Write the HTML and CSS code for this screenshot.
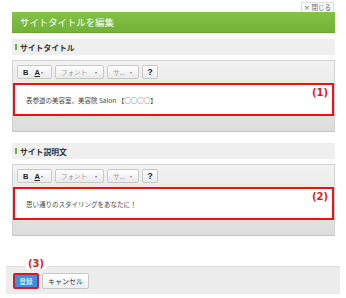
FILE: index.html
```html
<!DOCTYPE html>
<html lang="ja">
<head>
<meta charset="utf-8">
<link rel="stylesheet" href="styles.css">
</head>
<body>
<div class="page">
  <div class="close-row"><span class="close">× 閉じる</span></div>
  <div class="header">サイトタイトルを編集</div>

  <div class="label"><span class="mark"></span>サイトタイトル</div>
  <div class="editor">
    <div class="toolbar">
      <div class="btn btn-ba"><b>B</b><span class="a">A</span><span class="caret">▾</span></div>
      <div class="btn btn-font"><span>フォント</span><span class="caret">▾</span></div>
      <div class="btn btn-size"><span>サ...</span><span class="caret">▾</span></div>
      <div class="btn btn-help">?</div>
    </div>
    <div class="area">
      <span class="text">表参道の美容室、美容院 Salon 【○○○○】</span>
      <span class="note">(1)</span>
    </div>
    <div class="foot"></div>
  </div>

  <div class="label label-2"><span class="mark"></span>サイト説明文</div>
  <div class="editor">
    <div class="toolbar">
      <div class="btn btn-ba"><b>B</b><span class="a">A</span><span class="caret">▾</span></div>
      <div class="btn btn-font"><span>フォント</span><span class="caret">▾</span></div>
      <div class="btn btn-size"><span>サ...</span><span class="caret">▾</span></div>
      <div class="btn btn-help">?</div>
    </div>
    <div class="area">
      <span class="text">思い通りのスタイリングをあなたに！</span>
      <span class="note">(2)</span>
    </div>
    <div class="foot"></div>
  </div>
</div>
<div class="bar">
  <span class="note note-3">(3)</span>
  <div class="submit">登録</div>
  <div class="cancel">キャンセル</div>
</div>
</body>
</html>
```
FILE: styles.css
```css
html, body {
  margin: 0;
  padding: 0;
  background: #fff;
}
body {
  width: 346px;
  height: 298px;
  overflow: hidden;
  font-family: "Noto Sans CJK JP", "Noto Sans", sans-serif;
  color: #333;
}
.page {
  padding: 2px 11px 0 12px;
}
.close-row {
  display: flex;
  justify-content: flex-end;
  padding-right: 1px;
}
.close {
  display: block;
  height: 9px;
  line-height: 9px;
  font-size: 6.5px;
  color: #666;
  padding: 0 2px;
  border: 1px solid #ddd;
  border-bottom: none;
  background: #fafafa;
}
.header {
  height: 21px;
  line-height: 21px;
  background: linear-gradient(#85c247, #72b237);
  color: #fff;
  font-size: 9.4px;
  padding-left: 8px;
  border-bottom: 1px solid #6aa532;
  box-sizing: border-box;
}
.label {
  margin-top: 6px;
  height: 16px;
  background: #efefef;
  display: flex;
  align-items: center;
  font-size: 7.8px;
  font-weight: bold;
  color: #333;
  padding-left: 3px;
}
.label-2 {
  margin-top: 11px;
}
.mark {
  width: 2px;
  height: 6px;
  background: #6cb33e;
  margin-right: 3px;
}
.editor {
  margin-top: 5px;
  border: 1px solid #d2d2d2;
  border-bottom-color: #c4c4c4;
  background: linear-gradient(#f2f2f2, #dcdcdc);
}
.toolbar {
  height: 22px;
  display: flex;
  align-items: center;
  gap: 3px;
  padding-left: 4px;
}
.btn {
  height: 14px;
  box-sizing: border-box;
  border: 1px solid #c8c8c8;
  border-radius: 2px;
  background: linear-gradient(#ffffff, #e9e9e9);
  display: flex;
  align-items: center;
  font-size: 6.5px;
  color: #999;
}
.btn-ba {
  width: 35px;
  padding-left: 5px;
  color: #222;
}
.btn-ba b {
  font-family: "Liberation Sans", sans-serif;
  font-size: 7.5px;
  margin-right: 6px;
}
.btn-ba .a {
  font-family: "Liberation Sans", sans-serif;
  font-weight: bold;
  font-size: 7.5px;
  text-decoration: underline;
  color: #222;
}
.caret {
  font-size: 4px;
  color: #777;
  margin-left: 1px;
}
.btn-font {
  width: 49px;
  padding-left: 5px;
  justify-content: space-between;
  padding-right: 6px;
}
.btn-size {
  width: 32px;
  padding-left: 5px;
  justify-content: space-between;
  padding-right: 6px;
}
.btn-help {
  width: 16px;
  justify-content: center;
  font-family: "Liberation Sans", sans-serif;
  font-weight: bold;
  font-size: 8.5px;
  color: #222;
}
.area {
  position: relative;
  height: 33px;
  box-sizing: border-box;
  border: 2px solid #ee1111;
  background: #fff;
  display: flex;
  align-items: center;
  padding-left: 11px;
}
.text {
  font-size: 6.5px;
  color: #444;
}
.note {
  position: absolute;
  right: 4px;
  top: 2px;
  font-family: "DejaVu Sans", sans-serif;
  font-weight: bold;
  font-size: 10px;
  color: #e21b1b;
}
.foot {
  height: 15px;
}
.bar {
  position: relative;
  margin: 30px 6px 0 6px;
  height: 28px;
  box-sizing: border-box;
  background: #ececec;
  border-top: 1px solid #e0e0e0;
  display: flex;
  align-items: flex-start;
  gap: 3px;
  padding: 6px 0 0 7px;
}
.note-3 {
  right: auto;
  left: 20px;
  top: -8px;
  background: #fff;
  padding: 0 2px;
  line-height: 10px;
}
.submit {
  width: 26px;
  height: 16px;
  box-sizing: border-box;
  border: 2px solid #d81a28;
  background: #2f93e8;
  color: #fff;
  font-size: 6.5px;
  display: flex;
  align-items: center;
  justify-content: center;
  border-radius: 2px;
}
.cancel {
  width: 47px;
  height: 16px;
  box-sizing: border-box;
  border: 1px solid #c8c8c8;
  background: linear-gradient(#fff, #f0f0f0);
  color: #333;
  font-size: 7px;
  display: flex;
  align-items: center;
  justify-content: center;
  border-radius: 2px;
}
```
